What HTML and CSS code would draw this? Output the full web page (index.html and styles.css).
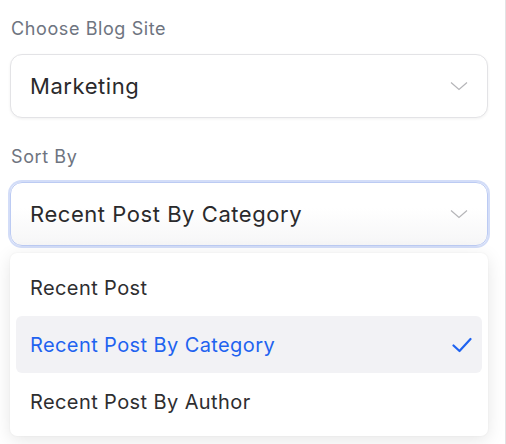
FILE: index.html
```html
<!DOCTYPE html>
<html lang="en">
<head>
<meta charset="utf-8">
<title>Blog settings</title>
<link rel="stylesheet" href="styles.css">
</head>
<body>
<div class="panel">
  <div class="field">
    <div class="label">Choose Blog Site</div>
    <div class="select">
      <span class="value">Marketing</span>
      <svg class="chev" width="18" height="10" viewBox="0 0 18 10"><path d="M1 1.5 L9 8.5 L17 1.5" fill="none" stroke="#b5b5b8" stroke-width="1.2"/></svg>
    </div>
  </div>
  <div class="field field-sort">
    <div class="label">Sort By</div>
    <div class="select select-open">
      <span class="value">Recent Post By Category</span>
      <svg class="chev" width="18" height="10" viewBox="0 0 18 10"><path d="M1 1.5 L9 8.5 L17 1.5" fill="none" stroke="#b5b5b8" stroke-width="1.2"/></svg>
    </div>
    <ul class="menu">
      <li class="item">Recent Post</li>
      <li class="item item-active">Recent Post By Category
        <svg class="check" width="20" height="16" viewBox="0 0 20 16"><path d="M1.5 8.5 L7.5 14 L18.5 2" fill="none" stroke="#1f63f0" stroke-width="2.2" stroke-linecap="round" stroke-linejoin="round"/></svg>
      </li>
      <li class="item">Recent Post By Author</li>
    </ul>
  </div>
</div>
</body>
</html>
```

FILE: styles.css
```css
* { box-sizing: border-box; }
html, body { margin: 0; padding: 0; background: #fff; }
body {
  font-family: Inter, "Noto Sans", sans-serif;
  width: 506px;
  height: 444px;
  overflow: hidden;
}
.panel {
  width: 506px;
  height: 444px;
  border-right: 1px solid #e2e2e4;
  padding: 17px 17px 0 10px;
}
.field { display: flex; flex-direction: column; }
.label {
  font-size: 18px;
  line-height: 24px;
  letter-spacing: 0.6px;
  color: #6e7480;
  padding-left: 1px;
  margin-bottom: 13px;
}
.field-sort { margin-top: 27px; }
.select {
  height: 64px;
  border: 1px solid #e3e3e6;
  border-radius: 12px;
  background: #fff;
  box-shadow: 0 1px 3px rgba(0,0,0,0.06);
  display: flex;
  align-items: center;
  justify-content: space-between;
  padding: 0 19px 0 19px;
}
.select-open {
  border-color: #bccbf3;
  box-shadow: 0 0 0 2px #d3ddf8;
  background: linear-gradient(#fff 40%, #f6f6f7);
}
.value {
  font-size: 22px;
  letter-spacing: 0.55px;
  color: #2a2a2c;
}
.chev { display: block; }
.menu {
  list-style: none;
  margin: 7px 0 0 0;
  padding: 6px;
  background: #fff;
  border-radius: 7px;
  box-shadow: 0 4px 18px rgba(0,0,0,0.10), 0 0 2px rgba(0,0,0,0.06);
}
.item {
  height: 57px;
  display: flex;
  align-items: center;
  justify-content: space-between;
  padding: 0 10px 0 14px;
  font-size: 20px;
  letter-spacing: 0.4px;
  color: #2e2e30;
  border-radius: 6px;
}
.item-active {
  background: #f2f2f5;
  color: #1f63f0;
}
.check { display: block; }
```
